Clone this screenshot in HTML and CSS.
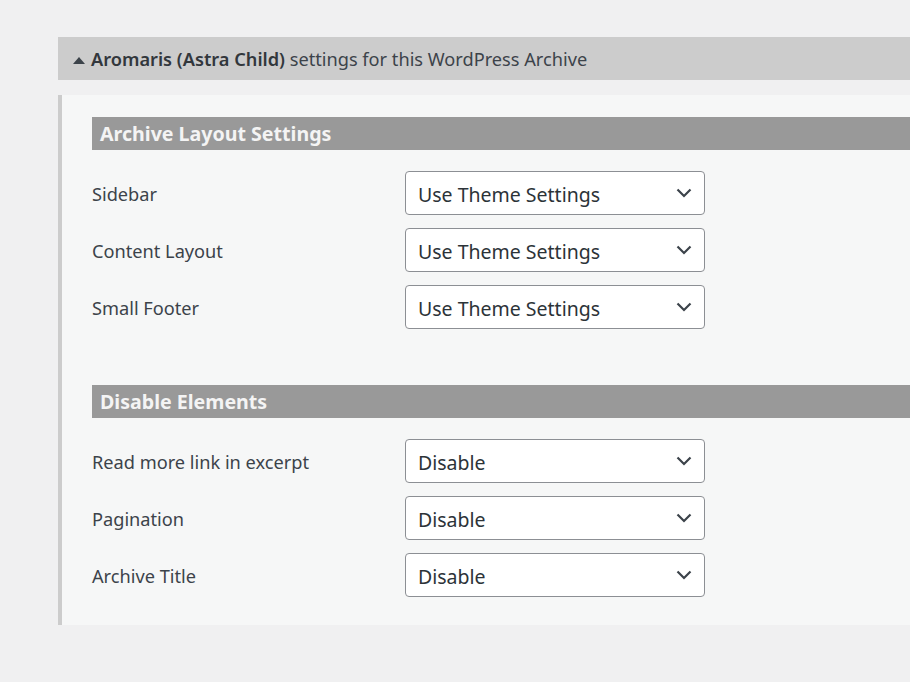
FILE: index.html
```html
<!DOCTYPE html>
<html>
  <head>
  <meta name="viewport" content="width=device-width, initial-scale=1.0">
  <meta charset="UTF-8">
  <link rel="stylesheet" href="styles.css">
  </head>
<body>

<div id="theme-settings">
    <div class="settings-toggle"><svg class="toggle-arrow" width="12" height="7" viewBox="0 0 12 7"><path d="M0 7 6 0l6 7z" fill="#3c434a"/></svg><b>Aromaris (Astra Child)</b> settings for this WordPress Archive</div>

    <div class="settings-panel">
        <h3 class="section-title">Archive Layout Settings</h3>
        <div class="setting-row">
            <label for="site-sidebar">Sidebar</label>
            <div class="select-wrap">
                <select id="site-sidebar"><option>Use Theme Settings</option></select>
                <svg class="chevron" width="16" height="10" viewBox="0 0 16 10"><path d="M1.5 1.5 8 8l6.5-6.5" fill="none" stroke="#3c434a" stroke-width="2.2"/></svg>
            </div>
        </div>
        <div class="setting-row">
            <label for="content-layout">Content Layout</label>
            <div class="select-wrap">
                <select id="content-layout"><option>Use Theme Settings</option></select>
                <svg class="chevron" width="16" height="10" viewBox="0 0 16 10"><path d="M1.5 1.5 8 8l6.5-6.5" fill="none" stroke="#3c434a" stroke-width="2.2"/></svg>
            </div>
        </div>
        <div class="setting-row">
            <label for="small-footer">Small Footer</label>
            <div class="select-wrap">
                <select id="small-footer"><option>Use Theme Settings</option></select>
                <svg class="chevron" width="16" height="10" viewBox="0 0 16 10"><path d="M1.5 1.5 8 8l6.5-6.5" fill="none" stroke="#3c434a" stroke-width="2.2"/></svg>
            </div>
        </div>

        <h3 class="section-title spaced">Disable Elements</h3>
        <div class="setting-row">
            <label for="read-more">Read more link in excerpt</label>
            <div class="select-wrap">
                <select id="read-more"><option>Disable</option></select>
                <svg class="chevron" width="16" height="10" viewBox="0 0 16 10"><path d="M1.5 1.5 8 8l6.5-6.5" fill="none" stroke="#3c434a" stroke-width="2.2"/></svg>
            </div>
        </div>
        <div class="setting-row">
            <label for="pagination">Pagination</label>
            <div class="select-wrap">
                <select id="pagination"><option>Disable</option></select>
                <svg class="chevron" width="16" height="10" viewBox="0 0 16 10"><path d="M1.5 1.5 8 8l6.5-6.5" fill="none" stroke="#3c434a" stroke-width="2.2"/></svg>
            </div>
        </div>
        <div class="setting-row">
            <label for="archive-title">Archive Title</label>
            <div class="select-wrap">
                <select id="archive-title"><option>Disable</option></select>
                <svg class="chevron" width="16" height="10" viewBox="0 0 16 10"><path d="M1.5 1.5 8 8l6.5-6.5" fill="none" stroke="#3c434a" stroke-width="2.2"/></svg>
            </div>
        </div>
    </div>
</div>

</body>
</html>
```

FILE: styles.css
```css
body{
margin: 0;
background-color: #f0f0f1;
font-family: "Noto Sans", "Open Sans", sans-serif;
color: #3c434a;
}

#theme-settings{
padding: 37px 0 57px 58px;
}

.settings-toggle{
height: 43px;
line-height: 44px;
background-color: #cccccc;
padding-left: 15px;
font-size: 18.2px;
color: #3c434a;
white-space: nowrap;
}

.settings-toggle b{
font-weight: 600;
color: #32373c;
}

.toggle-arrow{
margin-right: 6px;
vertical-align: 2px;
}

.settings-panel{
margin-top: 15px;
background-color: #f6f7f7;
border-left: 4px solid #cccccc;
padding: 22px 0 28px 30px;
}

.section-title{
margin: 0 0 21px 0;
height: 33px;
line-height: 34px;
background-color: #999999;
color: #f4f4f4;
font-size: 19.6px;
font-weight: 700;
padding-left: 8px;
white-space: nowrap;
}

.section-title.spaced{
margin-top: 56px;
}

.setting-row{
display: grid;
grid-template-columns: 313px 300px;
align-items: center;
margin-bottom: 13px;
}

.setting-row:last-child{
margin-bottom: 0;
}

.setting-row label{
font-size: 18.2px;
color: #3c434a;
padding-top: 1px;
}

.select-wrap{
position: relative;
height: 44px;
}

.select-wrap select{
-webkit-appearance: none;
appearance: none;
width: 300px;
height: 44px;
border: 1px solid #8c8f94;
border-radius: 4px;
background-color: #ffffff;
padding: 3px 40px 0 12px;
font-family: inherit;
font-size: 19.5px;
color: #2c3338;
}

.chevron{
position: absolute;
right: 13px;
top: 17px;
pointer-events: none;
}
```
